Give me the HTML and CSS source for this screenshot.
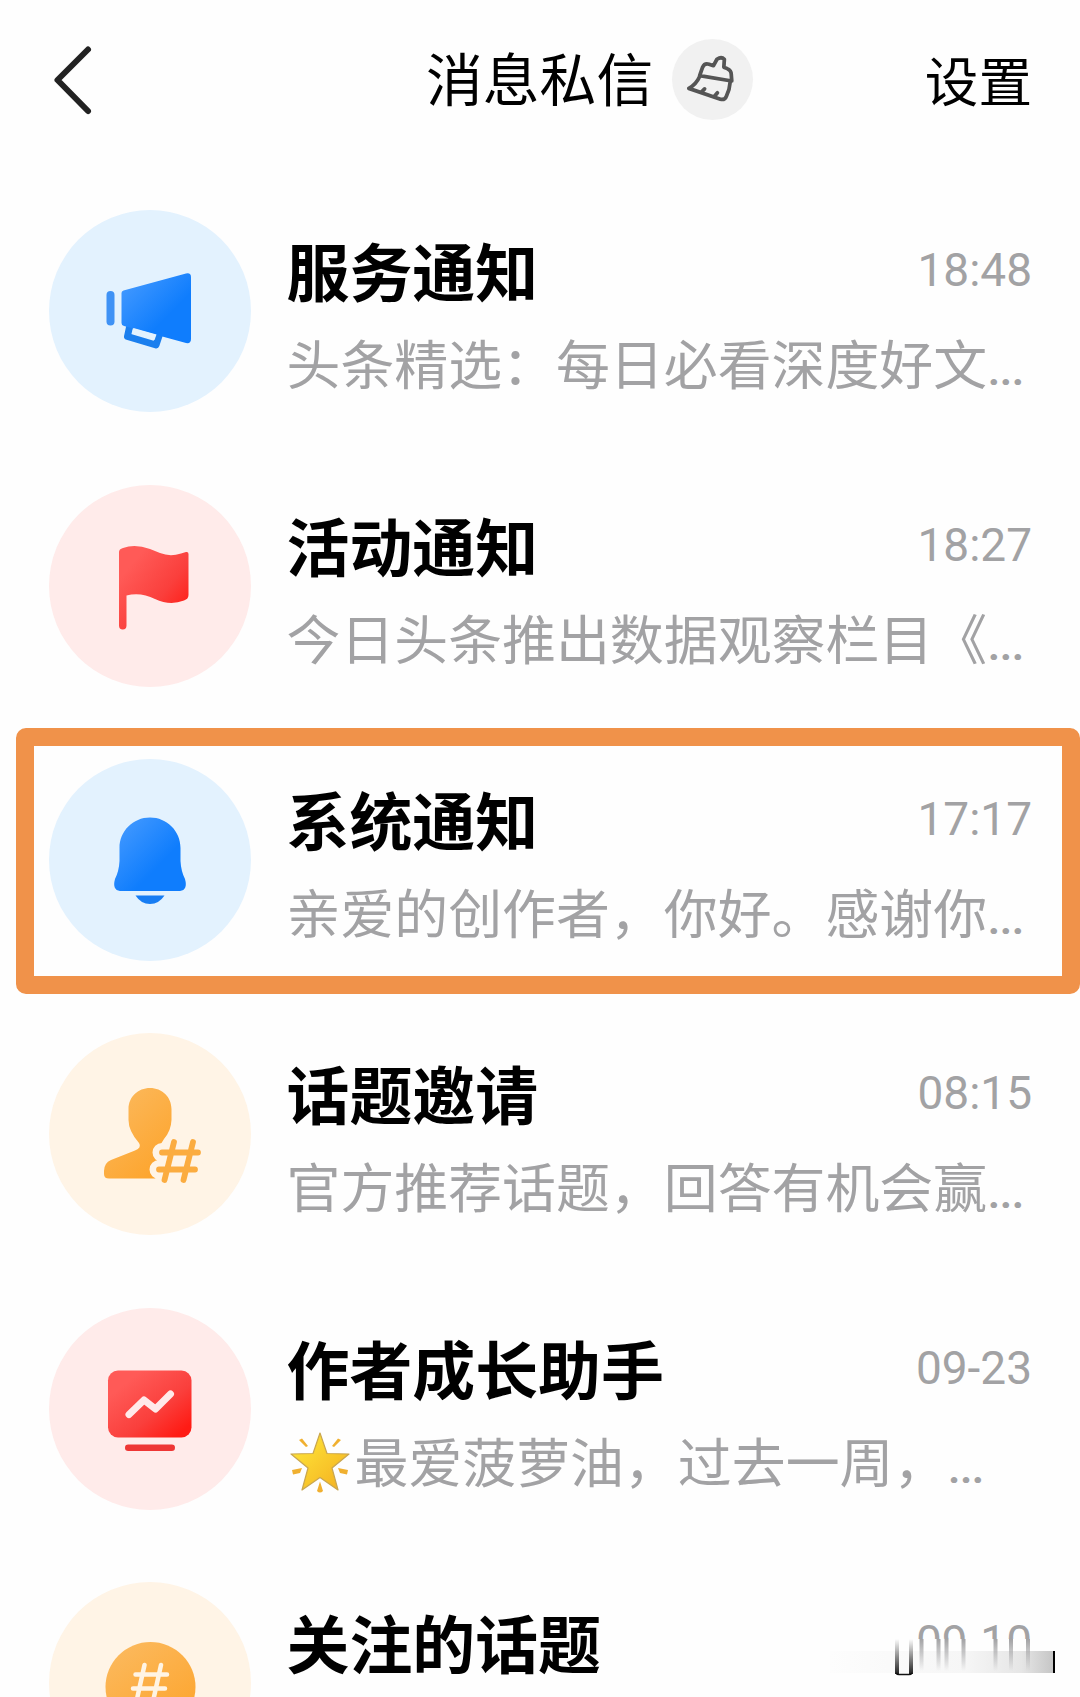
FILE: index.html
```html
<!DOCTYPE html>
<html lang="zh-CN">
<head>
  <meta charset="utf-8">
  <title>消息私信</title>
  <link rel="stylesheet" href="styles.css">
</head>
<body>
  <div class="page">
    <header class="header">
      <svg class="back" viewBox="0 0 44 72" fill="none" stroke="#222" stroke-width="6" stroke-linecap="round" stroke-linejoin="round">
        <path d="M37 5.5 L6.5 36 L37 67"/>
      </svg>
      <div class="heading">
        <h1>消息私信</h1>
        <span class="clean">
          <svg viewBox="0 0 82 82" fill="none" stroke="#555" stroke-width="3.8" stroke-linecap="round" stroke-linejoin="round">
            <path d="M28 37 L31 28.500 Q33 24 37.500 25.500 L42 27 L45.500 20.500 Q50 17.500 53 20.500 L52.500 28.500 L56 30 Q60 31.500 60 36 L60.500 42.500 Z"/>
            <path d="M28 38 Q24.500 46 17 50 L49 61 Q53.500 62 55 58 Q58.500 51 59 43"/>
            <path d="M30 53.500 L33 50.500 M43 58 L46 54.500"/>
          </svg>
        </span>
      </div>
      <span class="settings">设置</span>
    </header>

    <div class="list">
      <div class="item">
        <svg class="avatar blue" viewBox="0 0 202 202">
          <defs>
            <linearGradient id="blueFill" x1="0" y1="0" x2="0.8" y2="0.8">
              <stop offset="0" stop-color="#4a9dff"/>
              <stop offset="0.8" stop-color="#0f7dfd"/>
            </linearGradient>
            <linearGradient id="redFill" x1="0" y1="0" x2="1" y2="1">
              <stop offset="0.2" stop-color="#ff5a57"/>
              <stop offset="0.6" stop-color="#fa3f3c"/>
              <stop offset="0.9" stop-color="#ff1b14"/>
            </linearGradient>
            <linearGradient id="orangeFill" x1="0" y1="0" x2="0.7" y2="1">
              <stop offset="0" stop-color="#fbbb62"/>
              <stop offset="1" stop-color="#fda52e"/>
            </linearGradient>
          </defs>
          <rect x="57.500" y="81" width="8" height="34.500" rx="4" fill="#3f92f5"/>
          <path fill="none" stroke="#1b7fee" stroke-width="7" stroke-linejoin="round" d="M81 115 L78.500 126.500 L107 135 L111 123"/>
          <path fill="url(#blueFill)" d="M72.500 83 Q72.500 81 74.500 80.500 L137 63.500 Q142 62.500 142 67 V129 Q142 134 137 133 L75 116 Q72.500 115.500 72.500 113 Z"/>
          <path class="hole" d="M84.500 118 L107.500 124.500 L105.500 130 L82.500 123.500 Z"/>
        </svg>
        <div class="content">
          <div class="row"><h2>服务通知</h2><span class="time">18:48</span></div>
          <p>头条精选：每日必看深度好文<span class="dots">...</span></p>
        </div>
      </div>

      <div class="item">
        <svg class="avatar red" viewBox="0 0 202 202">
          <path fill="url(#redFill)" d="M70 67 Q70 64 74 63 Q86 58.500 101 64 L111 68 Q121 72 132 68.500 L137 67 Q139.500 66.500 139.500 69 V110 Q139.500 114 135 115.500 Q121 121 106 114 Q92 107 77.500 110.500 V140.500 Q77.500 144.500 73.700 144.500 Q70 144.500 70 140.500 Z"/>
        </svg>
        <div class="content">
          <div class="row"><h2>活动通知</h2><span class="time">18:27</span></div>
          <p>今日头条推出数据观察栏目《<span class="dots">...</span></p>
        </div>
      </div>

      <div class="item marked">
        <svg class="avatar blue" viewBox="0 0 202 202">
          <path fill="url(#blueFill)" d="M101 58.500 C118 58.500 131.500 72 131.500 89 V102 Q132 112 136 120 Q139 131 131 132 H71 Q63 131 66 120 Q70 112 70.500 102 V89 C70.500 72 84 58.500 101 58.500 Z"/>
          <path fill="#177df3" d="M86.500 136.500 H115.500 Q110 145 101 145 Q92 145 86.500 136.500 Z"/>
        </svg>
        <div class="content">
          <div class="row"><h2>系统通知</h2><span class="time">17:17</span></div>
          <p>亲爱的创作者，你好。感谢你<span class="dots">...</span></p>
        </div>
      </div>

      <div class="item">
        <svg class="avatar orange" viewBox="0 0 202 202">
          <path fill="url(#orangeFill)" d="M101 55 C113 55 122.500 64 122.500 76 V87 Q122 98 115 106 Q109 113 113 125 V145.500 H60 Q55 145.500 55 141 V138 Q55 130 62 127 L86 117.500 Q93 114.500 90 110 Q79.500 98 79.500 87 V76 C79.500 64 89 55 101 55 Z"/>
          <g fill="none" stroke-linecap="round">
            <path class="cutout" d="M113 119.500 H149 M110 136.500 H146 M125 109 L115.500 147 M144 109 L134.500 147"/>
            <path stroke="#fbac40" stroke-width="5.800" d="M113 119.500 H149 M110 136.500 H146 M125 109 L115.500 147 M144 109 L134.500 147"/>
          </g>
        </svg>
        <div class="content">
          <div class="row"><h2>话题邀请</h2><span class="time">08:15</span></div>
          <p>官方推荐话题，回答有机会赢<span class="dots">...</span></p>
        </div>
      </div>

      <div class="item">
        <svg class="avatar red" viewBox="0 0 202 202">
          <rect x="59" y="62.500" width="83.500" height="67" rx="10" fill="url(#redFill)"/>
          <rect x="76" y="136.500" width="50" height="6.500" rx="3.200" fill="#ee3635"/>
          <path fill="none" stroke="#ffeaea" stroke-width="7" stroke-linecap="round" stroke-linejoin="round" d="M80 106.500 L95 92 L106.500 101 L121.500 86"/>
        </svg>
        <div class="content">
          <div class="row"><h2>作者成长助手</h2><span class="time">09-23</span></div>
          <p><svg class="star" viewBox="0 0 62 62">
            <defs>
              <linearGradient id="starFill" x1="0" y1="0" x2="1" y2="1">
                <stop offset="0.2" stop-color="#fddf35"/>
                <stop offset="1" stop-color="#f3ad20"/>
              </linearGradient>
            </defs>
            <path fill="url(#starFill)" stroke="#c9a650" stroke-width="1.2" stroke-linejoin="round" d="M31 2 L38 22.500 L60 23 L43 37 L49 59 L31 46.500 L13 59 L19 37 L2 23 L24 22.500 Z"/>
            <path fill="#f0b030" d="M10 9 L13 7.500 L19 15 L17 16 Z M52 9 L49 7.500 L43 15 L45 16 Z M3 39 L13 37 L11 42 L4 43.500 Z M59 39 L49 37 L51 42 L58 43.500 Z M31 50.500 L34 60 Q31 63 28 60 Z"/>
          </svg>最爱菠萝油，过去一周，<span class="dots">...</span></p>
        </div>
      </div>

      <div class="item">
        <svg class="avatar orange" viewBox="0 0 202 202">
          <circle cx="101.500" cy="105" r="45" fill="url(#orangeFill)"/>
          <path fill="none" stroke="#fff4e4" stroke-width="4.500" stroke-linecap="round" d="M86.500 92.500 H118 M84 106.500 H116 M95.500 83 L88 117 M112 83 L104.500 117"/>
        </svg>
        <div class="content">
          <div class="row"><h2>关注的话题</h2><span class="time">09-10</span></div>
        </div>
        <!-- smudge over the lower half of the date -->
        <svg class="smudge" viewBox="0 0 250 60">
          <defs>
            <linearGradient id="fadeDown" x1="0" y1="0" x2="0" y2="1">
              <stop offset="0" stop-color="#a2a2a4"/>
              <stop offset="1" stop-color="#a2a2a4" stop-opacity="0"/>
            </linearGradient>
            <linearGradient id="fadeUp" x1="0" y1="0" x2="0" y2="1">
              <stop offset="0" stop-color="#222" stop-opacity="0"/>
              <stop offset="1" stop-color="#222"/>
            </linearGradient>
            <linearGradient id="band" x1="0" y1="0" x2="1" y2="0">
              <stop offset="0" stop-color="#fdfdfd"/>
              <stop offset="0.6" stop-color="#f6f6f6"/>
              <stop offset="0.85" stop-color="#e6e6e6"/>
              <stop offset="1" stop-color="#c4c4c4"/>
            </linearGradient>
          </defs>
          <rect x="60" y="0" width="190" height="60" fill="#fefefe"/>
          <rect x="0" y="12" width="225" height="22" fill="url(#band)"/>
          <path fill="url(#fadeDown)" d="M89.500 0 h4 v32 h-4 Z M106.500 0 h4 v32 h-4 Z M114.500 0 h4 v32 h-4 Z M131.500 0 h4 v32 h-4 Z M163.500 0 h4 v32 h-4 Z M179 0 h4 v32 h-4 Z M196 0 h4 v32 h-4 Z"/>
          <path fill="url(#fadeUp)" d="M65 0 h4 v35 h-4 Z M79 0 h4 v35 h-4 Z"/>
          <path fill="none" stroke="#111" stroke-width="1.500" d="M66 34 Q67 35.500 69 35.500 H79 Q81 35.500 82 34"/>
          <rect x="223" y="12" width="2" height="22" fill="#000"/>
        </svg>
      </div>
    </div>
  </div>
</body>
</html>
```
FILE: styles.css
```css
html, body {
  margin: 0;
  padding: 0;
  background-color: #fefefe;
  font-family: Roboto, "Noto Sans CJK SC", sans-serif;
}

.page {
  width: 1080px;
  height: 1697px;
  overflow: hidden;
}

h1, h2, p {
  margin: 0;
}

.header {
  height: 174px;
  padding: 0 48px 15px 51px;
  box-sizing: border-box;
  display: grid;
  grid-template-columns: 375px 1fr auto;
  align-items: center;
}

.back {
  width: 44px;
  height: 72px;
}

.heading {
  display: flex;
  align-items: center;
  gap: 19px;
}

h1 {
  font-size: 56.8px;
  font-weight: 400;
  line-height: 80px;
  padding-top: 5px;
  color: #000;
}

.clean {
  width: 81px;
  height: 81px;
  border-radius: 50%;
  background-color: #f1f1f1;
}

.settings {
  font-size: 53.6px;
  line-height: 80px;
  padding-top: 9px;
}

.item {
  height: 274.4px;
  padding: 0 48px 0 48.5px;
  box-sizing: border-box;
  display: flex;
  align-items: center;
  gap: 36px;
  position: relative;
}

.avatar {
  width: 202px;
  height: 202px;
  border-radius: 50%;
  flex-shrink: 0;
}

.blue {
  background-color: #e3f2fe;
}

.red {
  background-color: #ffebea;
}

.orange {
  background-color: #fff4e6;
}

.hole {
  fill: #e3f2fe;
}

.cutout {
  stroke: #fff4e6;
  stroke-width: 19;
}

.content {
  flex: 1;
  height: 202px;
}

.row {
  display: flex;
  justify-content: space-between;
  height: 117px;
}

h2 {
  font-size: 62.9px;
  font-weight: 700;
  line-height: 129px;
  color: #000;
}

.time {
  font-size: 46px;
  line-height: 121px;
  color: #a2a2a4;
}

p {
  font-size: 53.9px;
  line-height: 80px;
  white-space: nowrap;
  color: #a2a2a4;
}

.dots {
  font-size: 41px;
  font-weight: 700;
  margin-left: 1px;
}

.star {
  width: 62px;
  height: 62px;
  margin: 0 4px 0 2px;
  vertical-align: -10px;
}

/* orange frame round the highlighted row */
.marked::after {
  content: "";
  position: absolute;
  top: 5px;
  left: 16px;
  right: 0;
  height: 266px;
  box-sizing: border-box;
  border: 18px solid #f0924a;
  border-radius: 10px;
}

.smudge {
  position: absolute;
  top: 93px;
  left: 830px;
  width: 250px;
  height: 60px;
}
```
